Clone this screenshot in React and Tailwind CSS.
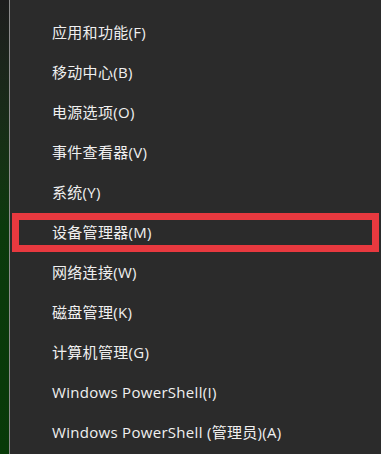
const items = [
  '应用和功能(F)',
  '移动中心(B)',
  '电源选项(O)',
  '事件查看器(V)',
  '系统(Y)',
  '设备管理器(M)',
  '网络连接(W)',
  '磁盘管理(K)',
  '计算机管理(G)',
  'Windows PowerShell(I)',
  'Windows PowerShell (管理员)(A)',
];

export default function App() {
  return (
    <div
      className="flex h-[454px] w-[381px] overflow-hidden bg-[#2b2b2b]"
      style={{ fontFamily: '"Open Sans", "Noto Sans CJK SC", sans-serif' }}
    >
      {/* desktop sliver on the left */}
      <div className="w-[9px] shrink-0 bg-gradient-to-b from-[#1d1d1d] via-[#0b3a0c] to-[#083a08]" />
      <div className="w-px shrink-0 bg-[#8c8c8c]" />

      <ul className="flex-1 pt-[12px]">
        {items.map((label, i) => (
          <li key={label} className="relative flex h-10 items-center pl-[42px] text-[15px] tracking-[0.3px] text-[#f0f0f0]">
            {label}
            {i === 5 && (
              <span className="pointer-events-none absolute bottom-0 left-[2px] right-[2px] top-[1px] border-[7px] border-[#e8393f]" />
            )}
          </li>
        ))}
      </ul>
    </div>
  );
}
